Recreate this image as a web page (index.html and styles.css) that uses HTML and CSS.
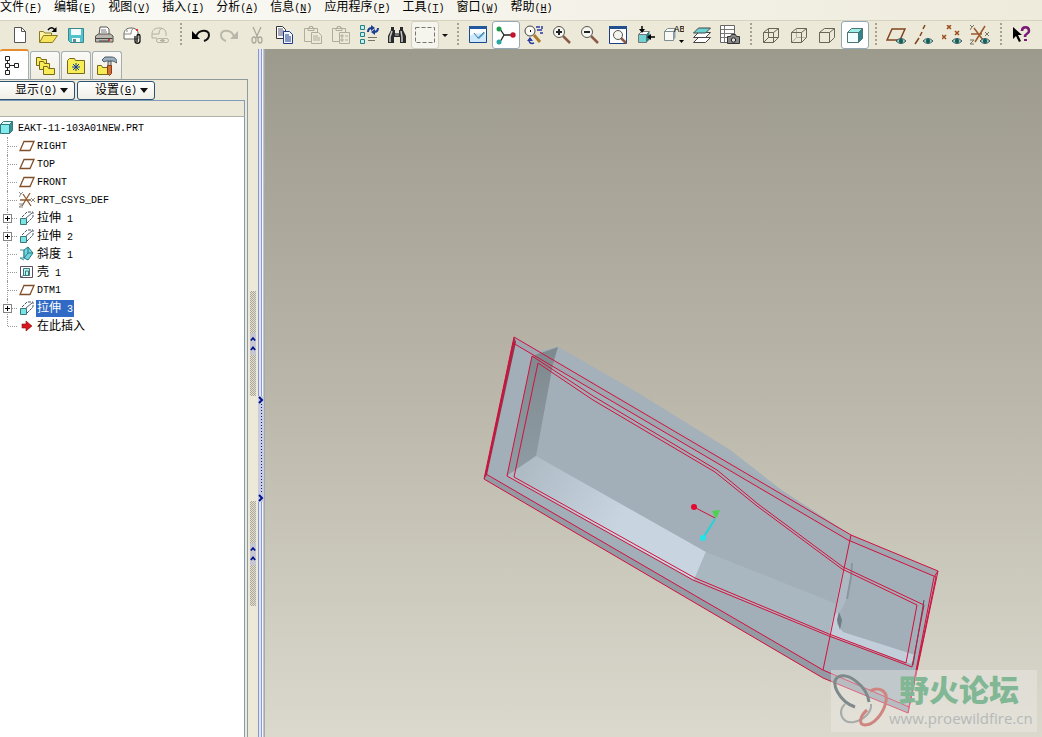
FILE: index.html
```
<!DOCTYPE html>
<html lang="zh-CN">
<head>
    <meta charset="UTF-8">
    <meta name="viewport" content="width=device-width, initial-scale=1.0">
    <title>EAKT-11-103A01NEW.PRT</title>
    <link rel="stylesheet" href="styles.css">
</head>
<body>
    <nav class="menubar">
        <button class="menu-item">文件<span class="key">(<u>F</u>)</span></button>
        <button class="menu-item">编辑<span class="key">(<u>E</u>)</span></button>
        <button class="menu-item">视图<span class="key">(<u>V</u>)</span></button>
        <button class="menu-item">插入<span class="key">(<u>I</u>)</span></button>
        <button class="menu-item">分析<span class="key">(<u>A</u>)</span></button>
        <button class="menu-item">信息<span class="key">(<u>N</u>)</span></button>
        <button class="menu-item">应用程序<span class="key">(<u>P</u>)</span></button>
        <button class="menu-item">工具<span class="key">(<u>T</u>)</span></button>
        <button class="menu-item">窗口<span class="key">(<u>W</u>)</span></button>
        <button class="menu-item">帮助<span class="key">(<u>H</u>)</span></button>
    </nav>

    <div class="toolbar">
        <!-- file -->
        <button class="tool" aria-label="新建"><svg viewBox="0 0 20 20"><path d="M4.500 2.500h7l4 4v11h-11z" fill="#fff" stroke="#555"/><path d="M11.500 2.500v4h4" fill="none" stroke="#555"/></svg></button>
        <button class="tool" aria-label="打开"><svg viewBox="0 0 20 20"><path d="M1.500 17V6.500h4l1 1.500h7v3" fill="#fff3a0" stroke="#8a7a20"/><path d="M1.500 17.500l4-7h14l-5 7z" fill="#f5e45c" stroke="#8a7a20"/><path d="M10 5c2-3 5-3 7 0" fill="none" stroke="#000" stroke-width="1.400"/><path d="M18.500 2v5h-5z"/></svg></button>
        <button class="tool" aria-label="保存"><svg viewBox="0 0 20 20"><path d="M2.500 3.500h15v14h-13l-2-2z" fill="#52c3cc" stroke="#3b8790"/><path d="M5 4h10v6H5zM6 13h8v4H6z" fill="#f4fbfb"/><path d="M7 14h3v3H7z" fill="#5c8b90"/></svg></button>
        <button class="tool" aria-label="打印"><svg viewBox="0 0 20 20"><path d="M5 10l1-8h7l2 2v6z" fill="#fff" stroke="#555"/><path d="M7 5h5M7 7h6" stroke="#777"/><path d="M1.500 11l3-2h12l2.500 2v6h-17.500z" fill="#b9b7ae" stroke="#55534c"/><path d="M2 13.500h16.500M5 16h10" stroke="#444"/><path d="M14 14h2v2h-2z" fill="#c33"/></svg></button>
        <button class="tool" aria-label="发送"><svg viewBox="0 0 20 20"><path d="M2 9c0-4 3-6 7-6s7 2 7 5v6H2z" fill="#fdfdf8" stroke="#666"/><path d="M2 9h7c0-3 1-5 3-6M4 6h2" fill="none" stroke="#888"/><path d="M15 17v-6c0-2 3-2 3 0v5c0 3-5 3-5 0v-5" fill="none" stroke="#111" stroke-width="1.300"/><path d="M14 4h2v2h-2z" fill="#d33"/></svg></button>
        <button class="tool" aria-label="链接"><svg viewBox="0 0 20 20" fill="none" stroke="#b3b0a2"><path d="M2 13V9c0-4 3-6 7-6s7 2 7 5v3M2 9h7c0-3 1-5 3-6M2 13h5"/><rect x="6.500" y="13.500" width="7" height="4" rx="2"/><rect x="11.500" y="13.500" width="7" height="4" rx="2"/><path d="M10 15.500h5"/></svg></button>
        <span class="sep"></span>

        <!-- edit -->
        <button class="tool" aria-label="撤消"><svg viewBox="0 0 20 20"><path d="M5 12C7 4 18 4 18 10c0 3-2 5-5 6" fill="none" stroke="#111" stroke-width="2"/><path d="M1 6v8h8z"/></svg></button>
        <button class="tool" aria-label="重做"><svg viewBox="0 0 20 20"><path d="M15 12C13 4 2 4 2 10c0 3 2 5 5 6" fill="none" stroke="#b9b7aa" stroke-width="2"/><path d="M19 6v8h-8z" fill="#b9b7aa"/></svg></button>
        <button class="tool" aria-label="剪切"><svg viewBox="0 0 20 20" fill="none" stroke="#aaa89c" stroke-width="1.300"><path d="M6 2l5 11M14 2L9 13"/><ellipse cx="7" cy="15" rx="2" ry="3"/><ellipse cx="13" cy="15" rx="2" ry="3"/></svg></button>
        <button class="tool" aria-label="复制"><svg viewBox="0 0 20 20"><path d="M1.500 1.500h6l3 3v9h-9z" fill="#fff" stroke="#333"/><path d="M3 4h5M3 6h6M3 8h6M3 10h6" stroke="#557"/><path d="M8.500 6.500h6l3 3v9h-9z" fill="#f2f6ff" stroke="#1d3b86"/><path d="M10 10h4M10 12h6M10 14h6M10 16h6" stroke="#1d3b86"/></svg></button>
        <button class="tool" aria-label="粘贴"><svg viewBox="0 0 20 20" fill="none" stroke="#b0ad9f"><path d="M8 16.500H1.500v-13h13V7M5 5.500h6V3H9.500V1.500h-3V3H5z"/><path d="M8.500 7.500h7l3 3v8h-10zM10 11h5M10 13h7M10 15h7"/></svg></button>
        <button class="tool" aria-label="选择性粘贴"><svg viewBox="0 0 20 20" fill="none" stroke="#b0ad9f"><path d="M8 16.500H1.500v-13h13V7M5 5.500h6V3H9.500V1.500h-3V3H5z"/><path d="M8.500 7.500h10v11h-10zM10 10h2v2h-2zM10 14h2v2h-2zM14 11h3M14 15h3"/></svg></button>
        <button class="tool" aria-label="再生"><svg viewBox="0 0 20 20"><g fill="#bff0f0" stroke="#287e86"><path d="M1.500 .5h4v4h-4zM1.500 7.500h4v4h-4zM1.500 14.500h4v4h-4z"/></g><path d="M9 12.500h9M9 15.500h7" stroke="#77756a"/><path d="M9 7c0-3 2-4 4-4M19 3c0 3-2 4-4 4" fill="none" stroke="#1b3f93" stroke-width="2"/><path d="M12 0l4 3-4 3zM16 4l-4 3 4 3z" fill="#1b3f93"/></svg></button>
        <button class="tool" aria-label="查找"><svg viewBox="0 0 20 20"><path d="M4 2h3v3h1v3h4V5h1V2h3v3l3 6v7h-6v-6H7v6H1v-7l3-6z" fill="#2a2a2a"/><path d="M5 6l-2 6v5M14 6l1 6v5" stroke="#c9c9c9" stroke-width="1.500" fill="none"/><path d="M8 8h4v3H8z" fill="#777"/></svg></button>
        <button class="tool picked" aria-label="选取"><svg viewBox="0 0 20 20"><path d="M.5 2.500h19v15H.5z" fill="none" stroke="#77756c" stroke-dasharray="4 2"/></svg></button>
        <button class="tool-drop" aria-label="选取选项"><span class="arrow small"></span></button>
        <span class="sep"></span>

        <!-- view -->
        <button class="tool" aria-label="重画"><svg viewBox="0 0 20 20"><path d="M1.500 1.500h17v16h-17z" fill="#cfe8fb" stroke="#194b8c"/><path d="M1 1h18v3H1z" fill="#23589e"/><path d="M2 4h16v6c-5-2-11-3-16 1z" fill="#fbfdff"/><path d="M6 8l4 5 6-6" fill="none" stroke="#3878ac"/><path d="M9 13l7-6 1 1-6 6z" fill="#4d9bc5"/></svg></button>
        <button class="tool active" aria-label="旋转中心"><svg viewBox="0 0 20 20"><path d="M4 4l4 6-4 7M8 10h9" fill="none" stroke="#222" stroke-width="1.300"/><circle cx="3" cy="4" r="2.500" fill="#1c9b4a"/><circle cx="3" cy="17" r="2.500" fill="#27a7a5"/><circle cx="17" cy="10" r="2.700" fill="#c3152d"/></svg></button>
        <button class="tool" aria-label="定向模式"><svg viewBox="0 0 20 20"><circle cx="6" cy="6" r="5" fill="#fbfaf0" stroke="#444"/><path d="M6 5h1v2H6z"/><path d="M10 10l6 7" stroke="#ad7c2f" stroke-width="3"/><path d="M12 2h4M13 5h5M16 8h3M18 1v3M5 15c0 3 2 4 5 3" fill="none" stroke="#293aa0" stroke-width="1.500"/><path d="M6 12l3 4H3z" fill="#293aa0"/></svg></button>
        <button class="tool" aria-label="放大"><svg viewBox="0 0 20 20"><path d="M11 11l7 7" stroke="#8c5b48" stroke-width="2.500"/><circle cx="7" cy="7" r="5.500" fill="#f7f7f2" stroke="#555"/><path d="M7 4v6M4 7h6" stroke="#222" stroke-width="2"/></svg></button>
        <button class="tool" aria-label="缩小"><svg viewBox="0 0 20 20"><path d="M11 11l7 7" stroke="#8c5b48" stroke-width="2.500"/><circle cx="7" cy="7" r="5.500" fill="#f7f7f2" stroke="#555"/><path d="M4 7h6" stroke="#222" stroke-width="2"/></svg></button>
        <button class="tool" aria-label="重新调整"><svg viewBox="0 0 20 20"><path d="M1.500 1.500h17v17h-17z" fill="#fdfdfd" stroke="#1b3f80"/><path d="M1 1h18v3H1z" fill="#23508f"/><path d="M12 12l6 6" stroke="#8c5b48" stroke-width="2.500"/><circle cx="10" cy="10" r="4.500" fill="#f4f4ee" stroke="#555"/></svg></button>
        <button class="tool" aria-label="定向"><svg viewBox="0 0 20 20"><path d="M2.500 9.500l3-3h8l-3 3z" fill="#fff" stroke="#777"/><path d="M2.500 9.500h8v8h-8z" fill="#72d2d1" stroke="#777"/><path d="M10.500 9.500l3-3v8l-3 3z" fill="#297e80"/><path d="M6 1v5M19 12h-5" stroke="#000" stroke-width="1.500"/><path d="M3 4h6L6 8zM15 9v6l-4-3z"/></svg></button>
        <button class="tool" aria-label="已命名视图"><svg viewBox="0 0 20 20"><path d="M.5 6.500l3-3h8l-2 3zM.5 6.500h9v9h-9z" fill="#faf9f4" stroke="#7c8f94"/><path d="M9.500 6.500l2-2v8l-2 3z" fill="#8ea5ad"/><text x="10" y="7" class="icon-text">AB</text><path d="M15 15h5l-2.500 3z"/></svg></button>
        <button class="tool" aria-label="层"><svg viewBox="0 0 20 20" stroke="#444"><path d="M1.500 17.500l5-5h12l-5 5z" fill="#fff"/><path d="M1.500 12.500l5-5h12l-5 5z" fill="#fff"/><path d="M1.500 8l5-5h12l-5 5z" fill="#69d4d2"/></svg></button>
        <button class="tool" aria-label="视图管理器"><svg viewBox="0 0 20 20"><path d="M.5 .5h14v17H.5z" fill="#fff" stroke="#666"/><path d="M1 4.500h13M1 8.500h13M1 12.500h13M4.500 1v16" stroke="#777"/><path d="M7.500 11.500h3l1-2h4l1 2h3v7h-12z" fill="#888" stroke="#333"/><circle cx="13.500" cy="15" r="2.200" fill="#ddd" stroke="#222"/></svg></button>
        <span class="sep"></span>

        <!-- display style -->
        <button class="tool" aria-label="线框"><svg viewBox="0 0 20 20" fill="none" stroke="#696657"><path d="M2.500 7.500h10v10h-10zM7.500 3.500h10v9h-10zM2.500 7.500l5-4M12.500 7.500l5-4M12.500 17.500l5-5M2.500 17.500l5-5"/></svg></button>
        <button class="tool" aria-label="隐藏线"><svg viewBox="0 0 20 20" fill="none" stroke="#696657"><path d="M7.500 3.500v9h10M2.500 17.500l5-5" stroke="#b4b19f"/><path d="M2.500 7.500h10v10h-10zM2.500 7.500l5-4h10l-5 4M17.500 3.500v9l-5 5"/></svg></button>
        <button class="tool" aria-label="无隐藏线"><svg viewBox="0 0 20 20" fill="none" stroke="#696657"><path d="M2.500 7.500h10v10h-10zM2.500 7.500l5-4h10l-5 4M17.500 3.500v9l-5 5"/></svg></button>
        <button class="tool active" aria-label="着色"><svg viewBox="0 0 20 20" stroke="#4c7477"><path d="M2.500 7.500l4-4h11l-4 4z" fill="#9cf0e7"/><path d="M2.500 7.500h11v10h-11z" fill="#f0ffff"/><path d="M13.500 7.500l4-4v10l-4 4z" fill="#30858a"/></svg></button>
        <span class="sep"></span>

        <!-- datum display -->
        <button class="tool" aria-label="基准平面"><svg viewBox="0 0 20 20"><path d="M6 4h13l-5 11H1z" fill="none" stroke="#80441c" stroke-width="1.500"/><path d="M10 16q5-5 10 0-5 5-10 0z" fill="#b7cfc7" stroke="#356"/><circle cx="15" cy="16" r="2.200" fill="#126454"/></svg></button>
        <button class="tool" aria-label="基准轴"><svg viewBox="0 0 20 20"><path d="M11 0L9 4M8 7l-2 4M5 13l-4 6" stroke="#80441c" stroke-width="1.500"/><path d="M9 16q5-5 10 0-5 5-10 0z" fill="#b7cfc7" stroke="#356"/><circle cx="14" cy="16" r="2.200" fill="#126454"/></svg></button>
        <button class="tool" aria-label="基准点"><svg viewBox="0 0 20 20"><path d="M5 0l4 4M9 0L5 4M0 10l4 4M4 10l-4 4M13 6l4 4M17 6l-4 4" stroke="#9c4c1c" stroke-width="1.500"/><path d="M10 16q5-5 10 0-5 5-10 0z" fill="#b7cfc7" stroke="#356"/><circle cx="15" cy="16" r="2.200" fill="#126454"/></svg></button>
        <button class="tool" aria-label="坐标系"><svg viewBox="0 0 20 20"><path d="M1 9h11M5 17L15 1M4 3l9 12" stroke="#9c5a2c" stroke-width="1.500"/><path d="M0 0l2 2 2-2M2 2L0 5M0 15h4l-4 4h4M15 7l4 4M19 7l-4 4" fill="none" stroke="#77715d"/><path d="M10 16q5-5 10 0-5 5-10 0z" fill="#b7cfc7" stroke="#356"/><circle cx="15" cy="16" r="2.200" fill="#126454"/></svg></button>
        <span class="sep"></span>
        <button class="tool" aria-label="帮助"><svg viewBox="0 0 20 20"><path d="M2 2v12l3-3 3 6 2-1-3-6h4z"/><path d="M11 6c0-5 7-5 7 0 0 3-4 2-4 6" fill="none" stroke="#7c1a78" stroke-width="2.500"/><path d="M13 14h3v2h-3z" fill="#7c1a78"/></svg></button>
    </div>

    <div class="workspace">
        <aside class="navigator">
            <div class="tabs">
                <button class="tab current" aria-label="模型树"><svg viewBox="0 0 20 20" fill="none" stroke="#222"><path d="M1.500 1.500h4v4h-4zM1.500 8.500h4v4h-4zM1.500 15.500h4v4h-4zM10.500 8.500h4v4h-4zM3.500 6v2M3.500 13v2M6 10.500h4"/></svg></button>
                <button class="tab" aria-label="文件夹浏览器"><svg viewBox="0 0 20 20" fill="#f7ec55" stroke="#77691c"><path d="M1.500 9.500v-8h4l1 2h5v6z"/><path d="M4.500 13.500v-8h4l1 2h5v6z"/><path d="M8.500 18.500v-8h4l1 2h6v6z"/></svg></button>
                <button class="tab" aria-label="收藏夹"><svg viewBox="0 0 20 20"><path d="M1.500 17.500v-13l2-2h5l1 2h9v13z" fill="#f7ee55" stroke="#77691c"/><path d="M10 7v8M6 11h8M7 8l6 6M13 8l-6 6" stroke="#123a9c"/></svg></button>
                <button class="tab" aria-label="连接"><svg viewBox="0 0 20 20"><path d="M.5 18.500v-9h4l1 2h6v7z" fill="#f7ec55" stroke="#77691c"/><path d="M11 5h3v5h-3z" fill="#ccc" stroke="#555"/><path d="M10.500 9.500h4v8l-2 2-2-2z" fill="#cf7136" stroke="#8b3b18"/><path d="M5 4l3-3h6c4 0 6 2 6 6l-4-2H9l-2 1z" fill="#9bb0c1" stroke="#4b5963"/></svg></button>
            </div>
            <div class="pane">
                <div class="pane-body">
                    <div class="pane-buttons">
                        <button class="menu-btn first">显示<span class="key">(<u>O</u>)</span><span class="arrow"></span></button>
                        <button class="menu-btn">设置<span class="key">(<u>G</u>)</span><span class="arrow"></span></button>
                    </div>
                    <div class="tree-head"></div>
                    <div class="tree">
                        <div class="root">
                            <svg class="node-icon" viewBox="0 0 16 16" stroke="#38777c"><path d="M.5 4.500l3-3h9l-3 3z" fill="#dffefe"/><path d="M.5 4.500h9v9H.5z" fill="#82ecec"/><path d="M9.500 4.500l3-3v9l-3 3z" fill="#359298"/></svg>
                            <span class="label">EAKT-11-103A01NEW.PRT</span>
                        </div>
                        <ul class="nodes">
                            <li><span class="slot"></span><svg class="node-icon" viewBox="0 0 16 16"><path d="M5 3.500h10l-4 9H1z" fill="none" stroke="#80502a" stroke-width="1.300"/></svg><span class="label">RIGHT</span></li>
                            <li><span class="slot"></span><svg class="node-icon" viewBox="0 0 16 16"><path d="M5 3.500h10l-4 9H1z" fill="none" stroke="#80502a" stroke-width="1.300"/></svg><span class="label">TOP</span></li>
                            <li><span class="slot"></span><svg class="node-icon" viewBox="0 0 16 16"><path d="M5 3.500h10l-4 9H1z" fill="none" stroke="#80502a" stroke-width="1.300"/></svg><span class="label">FRONT</span></li>
                            <li><span class="slot"></span><svg class="node-icon" viewBox="0 0 16 16"><path d="M1 8h11M3 14L11 1M4 2l8 12" stroke="#8f5a31" stroke-width="1.300"/><path d="M0 0l2 2 2-2M2 2L0 5M0 12h4l-4 3h4M12 6l4 4M16 6l-4 4" fill="none" stroke="#888"/></svg><span class="label">PRT_CSYS_DEF</span></li>
                            <li><span class="slot"><button class="toggle" aria-label="展开"></button></span><svg class="node-icon" viewBox="0 0 16 16"><path d="M3 7l5-5h6v5l-6 6" fill="none" stroke="#456" stroke-dasharray="3 1"/><path d="M7 8l6-5" stroke="#567"/><path d="M1.500 8.500h6v6h-6z" fill="#7ae4e4" stroke="#38777c"/></svg><span class="label"><span class="cjk">拉伸</span> 1</span></li>
                            <li><span class="slot"><button class="toggle" aria-label="展开"></button></span><svg class="node-icon" viewBox="0 0 16 16"><path d="M3 7l5-5h6v5l-6 6" fill="none" stroke="#456" stroke-dasharray="3 1"/><path d="M7 8l6-5" stroke="#567"/><path d="M1.500 8.500h6v6h-6z" fill="#7ae4e4" stroke="#38777c"/></svg><span class="label"><span class="cjk">拉伸</span> 2</span></li>
                            <li><span class="slot"></span><svg class="node-icon" viewBox="0 0 16 16"><path d="M1 4h4v8H1M1 12l4 2" fill="none" stroke="#3d929e"/><path d="M5 4l4-3 5 6-5 7-4-2z" fill="#6ed7de" stroke="#287886"/><path d="M9 1v6l-4 5M9 7h5" fill="none" stroke="#287886"/></svg><span class="label"><span class="cjk">斜度</span> 1</span></li>
                            <li><span class="slot"></span><svg class="node-icon" viewBox="0 0 16 16"><path d="M1.500 2.500h12v11h-12z" fill="#fff" stroke="#5c4d65"/><path d="M4.500 4.500h6v7h-6z" fill="#b9f5f3" stroke="#38777c"/><path d="M6.500 11V7h3v4M2 13l3-2" fill="none" stroke="#38777c"/></svg><span class="label"><span class="cjk">壳</span> 1</span></li>
                            <li><span class="slot"></span><svg class="node-icon" viewBox="0 0 16 16"><path d="M5 3.500h10l-4 9H1z" fill="none" stroke="#80502a" stroke-width="1.300"/></svg><span class="label">DTM1</span></li>
                            <li><span class="slot"><button class="toggle" aria-label="展开"></button></span><svg class="node-icon" viewBox="0 0 16 16"><path d="M3 7l5-5h6v5l-6 6" fill="none" stroke="#456" stroke-dasharray="3 1"/><path d="M7 8l6-5" stroke="#567"/><path d="M1.500 8.500h6v6h-6z" fill="#7ae4e4" stroke="#38777c"/></svg><span class="label selected"><span class="cjk">拉伸</span> 3</span></li>
                            <li><span class="slot"></span><svg class="node-icon" viewBox="0 0 16 16"><path d="M3 6h4V3l6 5-6 5v-3H3z" fill="#d8151e" stroke="#7d1010" stroke-width=".6"/></svg><span class="label"><span class="cjk">在此插入</span></span></li>
                        </ul>
                    </div>
                </div>
            </div>
            <div class="grips">
                <button class="grip" aria-label="折叠"><svg viewBox="0 0 7 20"><path d="M1 6l2.500-3L6 6M1 17l2.500-3L6 17"/></svg></button>
                <button class="grip" aria-label="折叠"><svg viewBox="0 0 7 20"><path d="M1 6l2.500-3L6 6M1 17l2.500-3L6 17"/></svg></button>
            </div>
            <div class="sash">
                <button class="sash-grip" aria-label="调整宽度">
                    <svg viewBox="0 0 6 8"><path d="M1 1l3 3-3 3"/></svg>
                    <span class="dots"></span>
                    <svg viewBox="0 0 6 8"><path d="M1 1l3 3-3 3"/></svg>
                </button>
            </div>
        </aside>

        <main class="viewport">
            <svg class="model" viewBox="265 49 777 688">
                <defs>
                    <linearGradient id="floor" gradientUnits="userSpaceOnUse" x1="525" y1="465" x2="620" y2="520">
                        <stop offset="0" stop-color="#aebbc5"/>
                        <stop offset="1" stop-color="#c8d5e0"/>
                    </linearGradient>
                    <linearGradient id="wall" x1="0" y1="0" x2="0" y2="1">
                        <stop offset="0" stop-color="#7e898f"/>
                        <stop offset="1" stop-color="#909ca4"/>
                    </linearGradient>
                </defs>
                <!-- solid body -->
                <path d="M514 337l26 14 18-4 75 43 97 60 50 39 71 46 87 36-30 142-85-35-339-199z" fill="#a2afb8"/>
                <path d="M514 337l337 198 87 36-2 6-88-37-335-197z" fill="#a0a6b0"/>
                <path d="M540 351l18-4 75 43 97 60 50 39z" fill="#a4b1ba"/>
                <path d="M486 474l337 196 86 37-1 6-85-35-339-199z" fill="#939aa4"/>
                <path d="M532 356l26-9-5 17-17 92-29 20z" fill="url(#wall)"/>
                <path d="M536 456l170 96-12 28-187-104z" fill="url(#floor)"/>
                <path d="M706 552l133 53-10 31-135-56z" fill="#a9b7c0"/>
                <!-- narrow end pocket -->
                <path d="M843 567l9 4-4 26-9 17-4 22-6 1z" fill="#adbac4"/>
                <path d="M838 612l-1 12 6 8 72 23-4 9-82-29 4-18z" fill="#c3cedb"/>
                <path d="M852 563l-1 14-4 22" fill="none" stroke="#8896a0" stroke-width="2"/>
                <path d="M839 612l-2 8 3 10 2-10z" fill="#6f7d86"/>
                <path d="M924 600l-11 65" stroke="#4c5660" stroke-width="1"/>
                <path d="M514 337l2 5-29 133-3 4z" fill="#a02c48"/>
                <!-- highlighted edges -->
                <g class="edges">
                    <path d="M514 337l337 198 87 36-30 142-85-35-339-199z"/>
                    <path d="M513 343l335 197 88 37-27 130-86-37-337-196z"/>
                    <path d="M532 356l61 40 124 74 41 34 85 63 81 38-12 62-83-31-136-56-186-104z"/>
                    <path d="M538 363l55 37 122 72 42 34 85 63 75 36-11 58-77-29-134-56-181-101z"/>
                    <path d="M851 535l-28 135"/>
                    <path d="M938 571l-4 6-25 130-1 6"/>
                </g>
                <!-- spin center -->
                <path d="M694 507l21 11" class="axis-x"/>
                <circle cx="694" cy="507" r="3" fill="#e4092f"/>
                <path d="M715 519l-12 19" class="axis-z"/>
                <circle cx="703" cy="538" r="3" fill="#22e4ea"/>
                <path d="M712 511l8-1-4 9z" fill="#4bd34e"/>
            </svg>
            <div class="watermark">
                <svg class="brand-mark" viewBox="0 0 58 58" fill="none">
                    <path d="M38 30C36 14 17 0 7 5c-9 5 2 25 17 30" stroke="#7d898b" stroke-width="3"/>
                    <path d="M14 32c-8 8-3 20 9 18 10-2 18-10 17-18" stroke="#a7abaa" stroke-width="2"/>
                    <path d="M39 19c9-5 18 0 16 10-2 12-12 24-21 24-7 0-5-9 2-15" stroke="#cf8580" stroke-width="3"/>
                </svg>
                <div class="brand">
                    <strong>野火论坛</strong>
                    <span>www.proewildfire.cn</span>
                </div>
            </div>
        </main>
    </div>
</body>
</html>
```
FILE: styles.css
```
:root {
    --face: #ece9d8;
    --line: #919b9c;
    --navy: #00138c;
    --edge: #d2103c;
    --select: #316ac5;
}

* {
    box-sizing: border-box;
}

body {
    margin: 0;
    height: 100vh;
    display: flex;
    flex-direction: column;
    overflow: hidden;
    background: var(--face);
    color: #000;
    font-family: "Liberation Mono", "Noto Sans CJK SC", monospace;
    font-size: 12px;
    line-height: 14px;
}

button {
    margin: 0;
    padding: 0;
    border: none;
    background: none;
    color: inherit;
    font: inherit;
    white-space: nowrap;
}

.key {
    font-size: 10px;
}

/* menu bar */
.menubar {
    display: flex;
    flex: none;
    gap: 12px;
    height: 20px;
    padding-bottom: 4px;
    background: linear-gradient(to right, #fbfbf8, #eeebdc);
}

/* toolbar */
.toolbar {
    display: flex;
    flex: none;
    align-items: center;
    height: 29px;
    padding-left: 6px;
    border-top: 1px solid #d6d2bf;
    background: var(--face);
}

.tool {
    display: flex;
    flex: none;
    align-items: center;
    justify-content: center;
    width: 28px;
    height: 28px;
    border: 1px solid transparent;
    border-radius: 3px;
}

.tool svg {
    width: 20px;
    height: 20px;
}

.tool.active {
    border-color: #93a9b8;
    background: #fff;
}

.tool.picked {
    border-color: #d3d0c2;
    background: #f5f4ed;
}

.tool-drop {
    display: flex;
    flex: none;
    align-items: center;
    justify-content: center;
    width: 12px;
    height: 28px;
}

.icon-text {
    font-size: 9px;
}

.sep {
    flex: none;
    width: 2px;
    height: 24px;
    margin: 0 5px 0 6px;
    background: repeating-linear-gradient(#a5a294 0 2px, transparent 2px 4px);
}

.arrow {
    border: 4px solid transparent;
    border-top: 5px solid #111;
    border-bottom: 0;
}

.arrow.small {
    border-width: 3px 3px 0;
}

/* navigator */
.workspace {
    display: flex;
    flex: 1;
    min-height: 0;
}

.navigator {
    display: grid;
    flex: none;
    grid-template-columns: 248px 10px 7px;
    grid-template-rows: 30px 1fr;
}

.tabs {
    display: flex;
    grid-column: 1 / 3;
    gap: 1px;
    padding-top: 2px;
}

.tab {
    display: flex;
    align-items: center;
    justify-content: center;
    width: 30px;
    border: 1px solid #a3afb0;
    border-bottom: none;
    border-radius: 3px 3px 0 0;
    background: linear-gradient(#fbfaf7, #efecdf);
}

.tab.current {
    width: 29px;
    margin-top: -2px;
    border-left: none;
    border-top: 2px solid #e68b2c;
    background: #fff;
}

.tab svg {
    width: 20px;
    height: 20px;
}

.pane {
    grid-column: 1;
    grid-row: 2;
    padding-right: 2px;
    border-top: 1px solid var(--line);
    border-right: 1px solid var(--line);
}

.pane-body {
    display: flex;
    flex-direction: column;
    height: 100%;
}

.pane-buttons {
    display: flex;
    gap: 2px;
    padding-top: 1px;
}

.menu-btn {
    display: flex;
    align-items: center;
    justify-content: flex-end;
    gap: 3px;
    width: 78px;
    height: 19px;
    padding-right: 6px;
    border: 1px solid #2c5273;
    border-radius: 3px;
    background: linear-gradient(#fff, #efeee6);
}

.menu-btn .key {
    margin-left: -3px;
}

.menu-btn.first {
    width: 75px;
    border-left: none;
    border-radius: 0 3px 3px 0;
}

.tree-head {
    height: 17px;
    border-top: 1px solid #7f9db9;
    border-right: 1px solid #7f9db9;
    border-bottom: 1px solid #b0b2a8;
}

/* model tree */
.tree {
    flex: 1;
    padding-top: 2px;
    border-right: 1px solid #7f9db9;
    background: #fff;
    font-size: 10px;
    line-height: 14px;
}

.root {
    display: flex;
    align-items: center;
    gap: 1px;
    height: 18px;
}

.nodes {
    margin: 0;
    padding: 0;
    list-style: none;
}

.nodes li {
    position: relative;
    display: flex;
    align-items: center;
    gap: 1px;
    height: 18px;
}

.nodes li::before {
    content: "";
    position: absolute;
    left: 7px;
    top: 0;
    height: 100%;
    border-left: 1px dotted #999;
}

.nodes li:last-child::before {
    height: 50%;
}

.slot {
    position: relative;
    display: flex;
    align-items: center;
    width: 18px;
    height: 18px;
    padding-left: 3px;
    background: repeating-linear-gradient(to right, #999 0 1px, transparent 1px 2px) 8px 9px / 10px 1px no-repeat;
}

.toggle {
    width: 9px;
    height: 9px;
    border: 1px solid #848484;
    background:
        linear-gradient(#000, #000) center / 5px 1px no-repeat,
        linear-gradient(#000, #000) center / 1px 5px no-repeat,
        #fff;
}

.node-icon {
    flex: none;
    width: 16px;
    height: 16px;
}

.label {
    padding: 2px 1px 0;
    white-space: pre;
}

.cjk {
    font-size: 12px;
}

.label.selected {
    background: var(--select);
    color: #fff;
}

/* collapse grips and sash */
.grips {
    display: flex;
    grid-column: 2;
    grid-row: 2;
    flex-direction: column;
    align-items: center;
    gap: 105px;
    padding-top: 212px;
}

.grip {
    display: flex;
    align-items: center;
    width: 6px;
    height: 105px;
    background: repeating-conic-gradient(#aaa79b 0 25%, #e2dfd1 0 50%) 0 0 / 2px 2px;
}

.grip svg,
.sash-grip svg {
    flex: none;
    width: 100%;
    overflow: visible;
    fill: none;
    stroke: var(--navy);
    stroke-width: 2;
}

.grip svg {
    height: 22px;
    background: #c8c6d2;
}

.sash {
    grid-column: 3;
    grid-row: 1 / 3;
    padding-top: 347px;
    border-right: 1px solid #a2a9b5;
    background: linear-gradient(to right, #8797cf 1px, #dfe4f6 1px 3px, #8c9bd3 3px 4px, #f3f4f8 4px 5px, #c3c5cc 5px);
}

.sash-grip {
    display: flex;
    flex-direction: column;
    align-items: center;
    width: 6px;
    height: 106px;
    background: #c9cbe0;
}

.sash-grip svg {
    height: 8px;
}

.dots {
    flex: 1;
    width: 1px;
    background: repeating-linear-gradient(#111a70 0 1px, transparent 1px 3px);
}

/* graphics window */
.viewport {
    position: relative;
    display: flex;
    flex: 1;
    min-width: 0;
    background: linear-gradient(#9c998d, #bab7aa 50%, #dbd9cd);
}

.model {
    width: 100%;
    height: 100%;
}

.edges {
    fill: none;
    stroke: var(--edge);
    stroke-width: 1;
}

.axis-x {
    stroke: #d2103c;
}

.axis-z {
    stroke: #22d4da;
    stroke-width: 2;
}

.watermark {
    position: absolute;
    right: 5px;
    bottom: 5px;
    display: flex;
    align-items: center;
    width: 206px;
    height: 62px;
    background: rgba(240, 238, 232, 0.4);
}

.brand-mark {
    flex: none;
    width: 58px;
    height: 58px;
}

.brand {
    display: flex;
    flex-direction: column;
    font-family: "Open Sans", "Noto Sans CJK SC", sans-serif;
}

.brand strong {
    padding-left: 10px;
    color: #82b795;
    font-size: 30px;
    font-weight: 900;
    line-height: 34px;
}

.brand span {
    color: #b5b9b7;
    font-size: 15px;
    line-height: 22px;
}
```
